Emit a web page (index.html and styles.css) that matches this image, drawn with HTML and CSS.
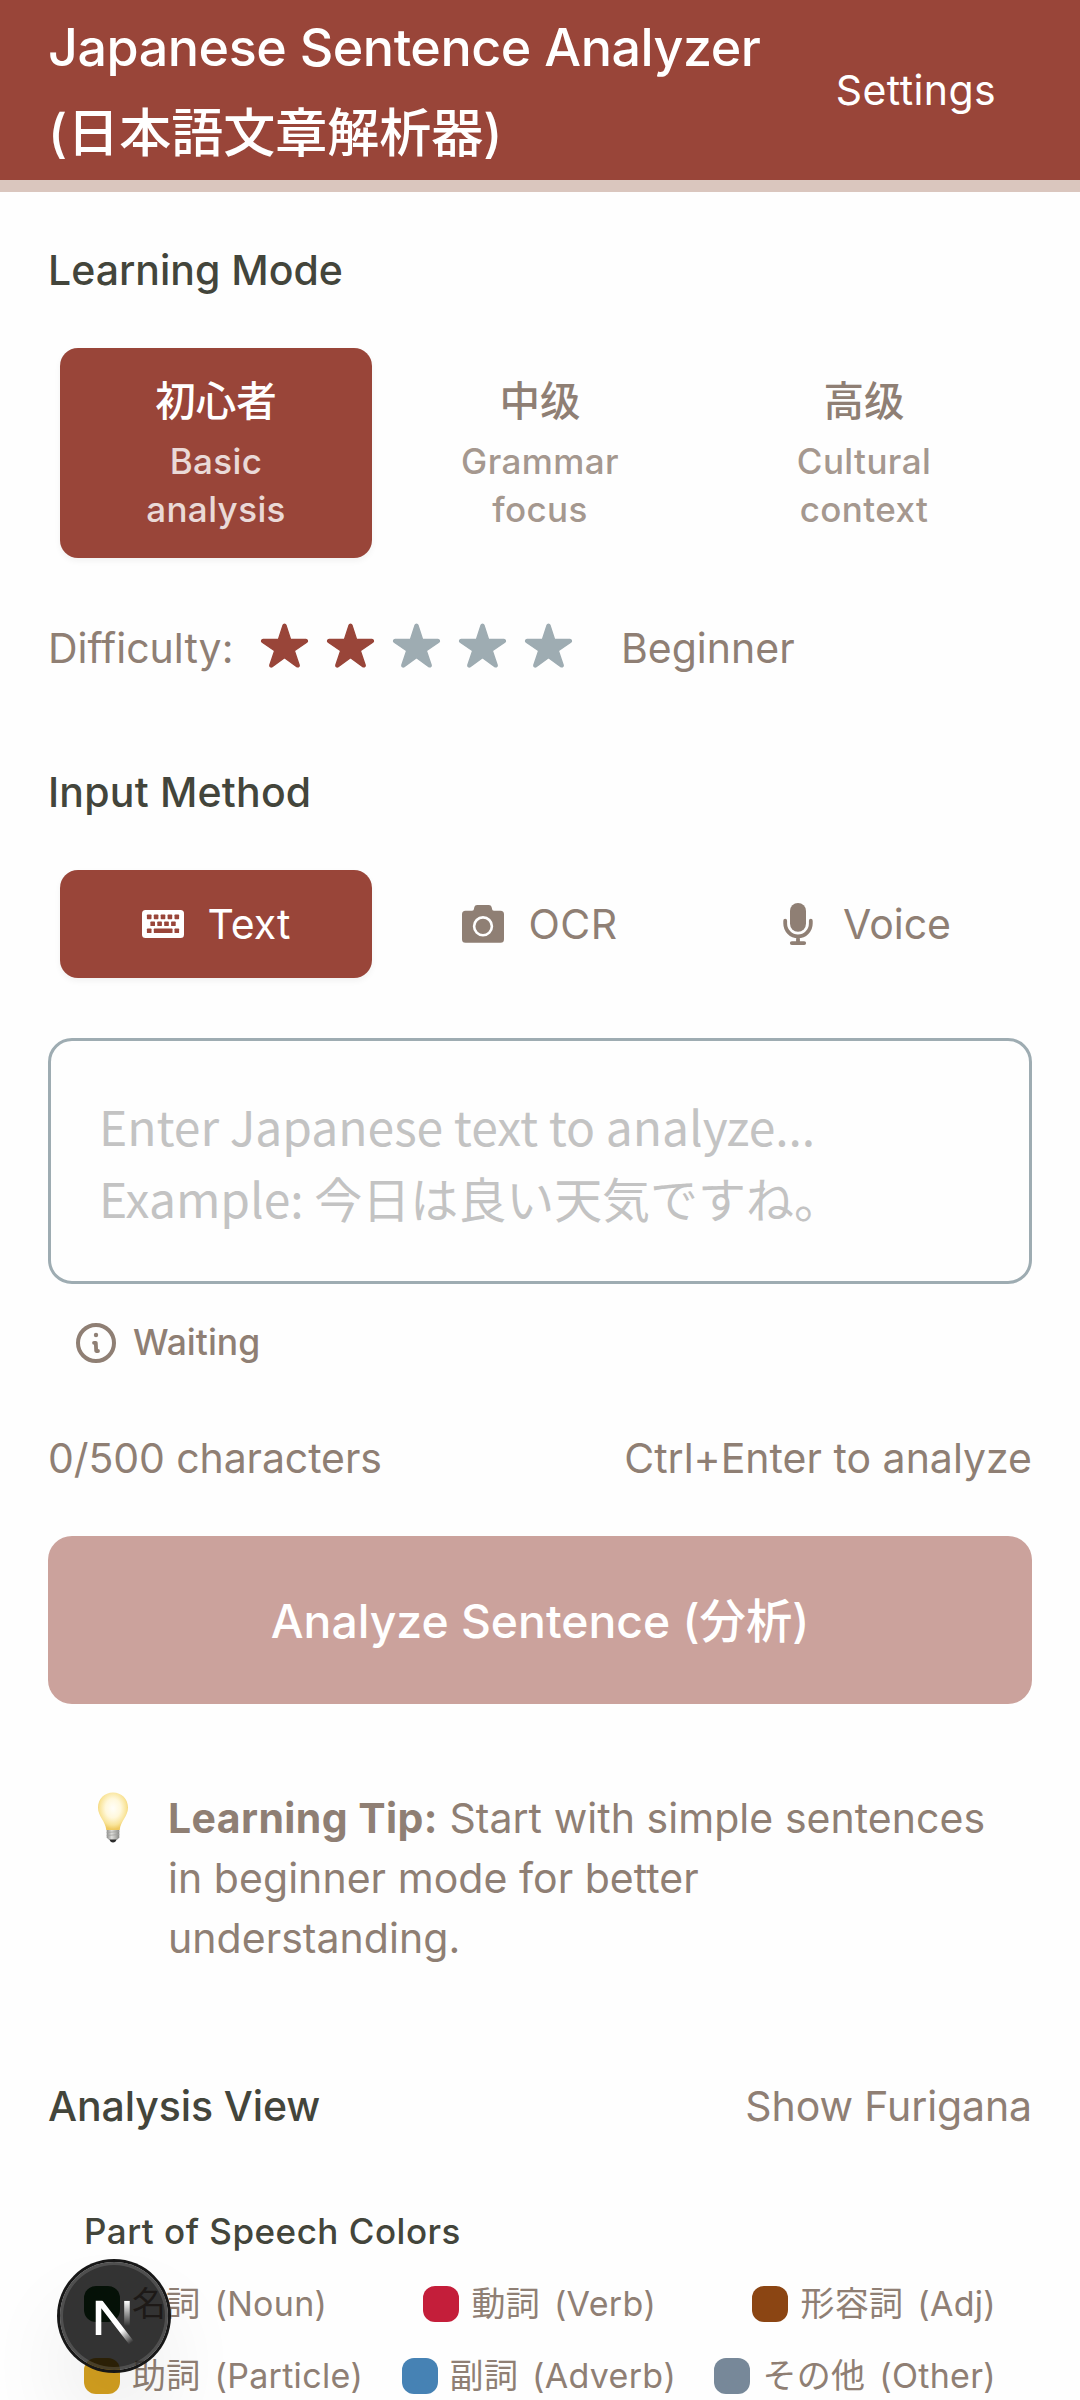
FILE: index.html
```html
<!DOCTYPE html>
<html lang="ja">
<head>
<meta charset="utf-8">
<title>Japanese Sentence Analyzer</title>
<link rel="stylesheet" href="styles.css">
</head>
<body>
<header class="header">
  <h1 class="title"><span class="title-en">Japanese Sentence Analyzer</span><span class="title-ja">(日本語文章解析器)</span></h1>
  <span class="settings">Settings</span>
</header>
<main class="main">
  <h2 class="heading">Learning Mode</h2>
  <div class="segments">
    <div class="seg mode active"><span class="seg-title">初心者</span><span class="seg-sub">Basic<br>analysis</span></div>
    <div class="seg mode"><span class="seg-title">中级</span><span class="seg-sub">Grammar<br>focus</span></div>
    <div class="seg mode"><span class="seg-title">高级</span><span class="seg-sub">Cultural<br>context</span></div>
  </div>
  <div class="difficulty">
    <span class="difficulty-label">Difficulty:</span>
    <div class="stars">
      <svg class="star on" viewBox="0 0 512 512"><path id="star" d="M394 480a16 16 0 0 1-9.390-3L256 383.760 127.390 477a16 16 0 0 1-24.550-18.080L153 310.350 23 221.200a16 16 0 0 1 9-29.200h160.380l48.400-148.950a16 16 0 0 1 30.440 0l48.400 149H480a16 16 0 0 1 9.050 29.200L359 310.350l50.130 148.530A16 16 0 0 1 394 480z"/></svg>
      <svg class="star on" viewBox="0 0 512 512"><use href="#star"/></svg>
      <svg class="star" viewBox="0 0 512 512"><use href="#star"/></svg>
      <svg class="star" viewBox="0 0 512 512"><use href="#star"/></svg>
      <svg class="star" viewBox="0 0 512 512"><use href="#star"/></svg>
    </div>
    <span>Beginner</span>
  </div>
  <h2 class="heading heading-input">Input Method</h2>
  <div class="segments">
    <div class="seg method active">
      <svg class="icon" viewBox="0 0 42 42">
        <rect x="0" y="7" width="42" height="28" rx="3.500" fill="currentColor"/>
        <g class="keys">
          <rect x="4.900" y="11.600" width="4.600" height="4.600" rx=".7"/><rect x="11.800" y="11.600" width="4.600" height="4.600" rx=".7"/><rect x="18.700" y="11.600" width="4.600" height="4.600" rx=".7"/><rect x="25.600" y="11.600" width="4.600" height="4.600" rx=".7"/><rect x="32.500" y="11.600" width="4.600" height="4.600" rx=".7"/>
          <rect x="8.400" y="18.500" width="4.600" height="4.600" rx=".7"/><rect x="15.300" y="18.500" width="4.600" height="4.600" rx=".7"/><rect x="22.200" y="18.500" width="4.600" height="4.600" rx=".7"/><rect x="29.100" y="18.500" width="4.600" height="4.600" rx=".7"/>
          <rect x="4.900" y="25.500" width="4.600" height="4.600" rx=".7"/><rect x="11.800" y="25.500" width="18.700" height="4.600" rx=".7"/><rect x="32.500" y="25.500" width="4.600" height="4.600" rx=".7"/>
        </g>
      </svg>
      <span>Text</span>
    </div>
    <div class="seg method">
      <svg class="icon" viewBox="0 0 42 42">
        <path fill="currentColor" d="M3.500 7.800H10c1.500 0 1.700-1 2-2.300C12.500 3 13.300 2 15.300 2h11.400c2 0 2.800 1 3.300 3.500.3 1.300.5 2.300 2 2.300h6.500A3.500 3.500 0 0 1 42 11.300v24.900a3.500 3.500 0 0 1-3.500 3.500h-35A3.500 3.500 0 0 1 0 36.200V11.300a3.500 3.500 0 0 1 3.500-3.500z"/>
        <circle cx="21" cy="23.300" r="8.900" fill="none" stroke="#fff" stroke-width="2.600"/>
      </svg>
      <span class="ocr">OCR</span>
    </div>
    <div class="seg method">
      <svg class="icon" viewBox="0 0 42 42">
        <rect x="13" y="0" width="16" height="28.800" rx="8" fill="currentColor"/>
        <path d="M8.200 17.700V20.500a12.800 12.800 0 0 0 25.600 0V17.700M21 33.500V39M14.800 40.100H27.200" fill="none" stroke="currentColor" stroke-width="3.800" stroke-linecap="round"/>
      </svg>
      <span>Voice</span>
    </div>
  </div>
  <div class="input">Enter Japanese text to analyze...<br>Example: 今日は良い天気ですね。</div>
  <div class="status">
    <svg class="info" viewBox="0 0 24 24" fill="none" stroke="currentColor" stroke-linecap="round" stroke-linejoin="round"><circle cx="12" cy="12" r="9" stroke-width="2"/><path d="M11 11.900h.9l.2 4.100h.9" stroke-width="1.900"/><circle cx="12" cy="8" r="1.100" fill="currentColor" stroke="none"/></svg>
    <span>Waiting</span>
  </div>
  <div class="meta"><span class="count">0/500 characters</span><span>Ctrl+Enter to analyze</span></div>
  <div class="button">Analyze Sentence (分析)</div>
  <div class="tip">
    <svg class="bulb" viewBox="0 0 34 54">
      <defs>
        <radialGradient id="glass" cx=".5" cy=".42" r=".56"><stop offset="0" stop-color="#fffef9"/><stop offset=".45" stop-color="#fff8dc"/><stop offset=".8" stop-color="#f9e499"/><stop offset="1" stop-color="#efca62"/></radialGradient>
        <linearGradient id="cap"><stop offset="0" stop-color="#8f8f8d"/><stop offset=".4" stop-color="#dededb"/><stop offset="1" stop-color="#8a8a87"/></linearGradient>
      </defs>
      <path d="M12.500 47h9l-2 3.500Q17 52.600 14.500 50.500z" fill="#2b2b2b"/>
      <path d="M10.700 38h12.600v8.500L21.500 48.500h-9L10.700 46.500z" fill="url(#cap)"/>
      <path d="M10.700 41.500l12.600-1M10.700 44.500l12.600-1" stroke="#a3a3a0" stroke-width=".8"/>
      <path d="M17 1.500c8.600 0 15 6.600 15 15 0 9-7.500 13.500-8.300 22.500H10.300C9.500 30 2 25.500 2 16.500c0-8.400 6.400-15 15-15z" fill="url(#glass)"/>
    </svg>
    <p class="tip-text"><b>Learning Tip:</b> Start with simple sentences<br>in beginner mode for better<br>understanding.</p>
  </div>
  <div class="view"><h2 class="heading">Analysis View</h2><span>Show Furigana</span></div>
  <section class="legend">
    <h3 class="legend-title">Part of Speech Colors</h3>
    <div class="legend-row">
      <span class="pos"><i class="swatch noun"></i>名詞 (Noun)</span>
      <span class="pos"><i class="swatch verb"></i>動詞 (Verb)</span>
      <span class="pos"><i class="swatch adj"></i>形容詞 (Adj)</span>
    </div>
    <div class="legend-row">
      <span class="pos"><i class="swatch particle"></i>助詞 (Particle)</span>
      <span class="pos"><i class="swatch adverb"></i>副詞 (Adverb)</span>
      <span class="pos"><i class="swatch other"></i>その他 (Other)</span>
    </div>
  </section>
</main>
<div class="badge">
  <svg class="badge-mark" viewBox="0 0 36 36">
    <defs>
      <linearGradient id="diag" gradientUnits="userSpaceOnUse" x1="9.956" y1="11.123" x2="15.478" y2="17.967"><stop stop-color="#fff"/><stop offset=".604" stop-color="#fff" stop-opacity="0"/></linearGradient>
      <linearGradient id="bar" gradientUnits="userSpaceOnUse" x1="11.822" y1="1.400" x2="11.791" y2="9.625"><stop stop-color="#fff"/><stop offset="1" stop-color="#fff" stop-opacity="0"/></linearGradient>
      <clipPath id="trim"><rect x="0" y="1.200" width="20" height="20"/></clipPath>
    </defs>
    <g transform="translate(10.500 11.700)" clip-path="url(#trim)" fill="none" stroke-width="1.860">
      <path d="M13.300 15.200L2.340 1V12.600" stroke="url(#diag)" stroke-linejoin="bevel"/>
      <path d="M11.825 1.200V13.100" stroke="url(#bar)"/>
    </g>
  </svg>
</div>
</body>
</html>
```
FILE: styles.css
```css
*{box-sizing:border-box}
body{margin:0;height:2400px;overflow:hidden;background:#fefefe;font:400 41px/60px Inter,"Noto Sans CJK JP",sans-serif;color:#8f7f74}
h1,h2,h3,p{margin:0}
svg{display:block;flex:none}
.header{display:flex;background:#994539;color:#fff;height:192px;border-bottom:12px solid #dac6be;padding:0 84px 0 48px;justify-content:space-between;align-items:center}
.title{font-weight:500;font-size:52px;line-height:84px}
.title-en,.title-ja{display:block}
.title-en{letter-spacing:-.47px}
.title-ja{padding-top:2px;margin-bottom:-2px}
.settings{letter-spacing:.4px}
.main{padding:48px 48px 0}
.heading{font-size:41px;font-weight:500;color:#43453b}
.heading-input{margin-top:84px;letter-spacing:.2px}
.segments{display:grid;grid-template-columns:repeat(3,1fr);gap:12px;padding:12px;margin-top:36px;font-weight:500}
.seg{border-radius:18px;text-align:center}
.active{background:#994539;color:#fff;box-shadow:0 3px 6px rgba(0,0,0,.05)}
.mode{padding:24px 0;height:210px}
.seg-title{display:block;font-size:40.5px}
.seg-sub{display:block;margin-top:5px;font-size:35px;line-height:48px;letter-spacing:.4px;opacity:.8}
.difficulty{display:flex;align-items:center;margin-top:48px}
.difficulty-label{width:212px}
.stars{display:flex;gap:17px;margin:-5px 48px 0 0}
.star{width:49px;height:49px;fill:#9eacb2;stroke:#9eacb2;stroke-width:14;stroke-linejoin:round;overflow:visible}
.star.on{fill:#994539;stroke:#994539}
.method{display:flex;align-items:center;justify-content:center;gap:24px;height:108px;font-weight:400}
.ocr{letter-spacing:.5px}
.icon{width:42px;height:42px}
.keys{fill:#994539}
.input{margin-top:48px;height:246px;border:3px solid #9eacb2;border-radius:24px;padding:48px;font:400 48px/72px "Noto Sans CJK JP",sans-serif;letter-spacing:-.03px;color:#c3c3c3}
.status{display:flex;align-items:center;gap:13px;margin-top:35px;padding-left:24px;font-size:35.5px;font-weight:500;line-height:48px}
.info{width:48px;height:48px}
.meta{display:flex;justify-content:space-between;margin-top:61px}
.count{letter-spacing:-.1px}
.button{display:flex;align-items:center;justify-content:center;margin-top:48px;height:168px;padding-top:1px;border-radius:24px;background:#cba29c;color:#fff;font-size:46.3px;font-weight:500}
.tip{display:flex;gap:38px;margin-top:84px;padding-left:48px}
.bulb{width:34px;height:54px;margin-top:3px}
.tip-text{white-space:nowrap;letter-spacing:.05px}
.tip-text b{letter-spacing:.4px}
.view{display:flex;justify-content:space-between;margin-top:108px;letter-spacing:-.1px}
.legend{display:flex;flex-direction:column;gap:24px;margin-top:71px;padding:0 36px;line-height:48px}
.legend-title{font-size:35px;font-weight:500;color:#43453b;letter-spacing:.5px;margin-bottom:1px}
.legend-row{display:flex;justify-content:space-between;font-size:34px;letter-spacing:.3px;word-spacing:4px}
.pos{display:flex;align-items:center;gap:12px}
.swatch{width:36px;height:36px;border-radius:12px}
.noun{background:#1a5426}
.verb{background:#c41e3a}
.adj{background:#8b4513}
.particle{background:#d4a020}
.adverb{background:#4682b4}
.other{background:#778899}
.badge{position:absolute;left:60px;top:2262px;width:108px;height:108px;border-radius:50%;background:rgba(0,0,0,.8);box-shadow:0 0 0 3px #171717,inset 0 0 0 3px rgba(255,255,255,.14),0 48px 96px -24px rgba(0,0,0,.24)}
.badge-mark{width:108px;height:108px}
```
